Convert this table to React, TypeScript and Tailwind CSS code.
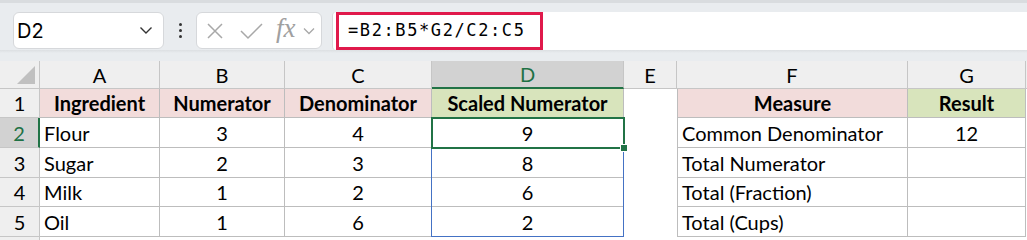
import { ReactNode } from 'react'

const cols = ['A', 'B', 'C', 'D', 'E', 'F', 'G']

const rows: [string, string, string, string, string, string][] = [
  ['Flour', '3', '4', '9', 'Common Denominator', '12'],
  ['Sugar', '2', '3', '8', 'Total Numerator', ''],
  ['Milk', '1', '2', '6', 'Total (Fraction)', ''],
  ['Oil', '1', '6', '2', 'Total (Cups)', ''],
]

const cellFont = { fontFamily: 'Lato, "Open Sans", sans-serif' }

function Cell({ children, className = '' }: { children?: ReactNode; className?: string }) {
  return (
    <div className={`flex items-center border-r border-b border-[#bdbdbd] text-[20px] text-black ${className}`} style={cellFont}>
      {children}
    </div>
  )
}

export default function App() {
  return (
    <div className="w-[1027px] h-[240px] overflow-hidden bg-white">
      {/* toolbar */}
      <div className="h-[61px] bg-[#e9ecef] border-t-[3px] border-[#d9dcdf] relative">
        <div className="flex items-start pt-[9px] pl-[13px]">
          <div className="w-[151px] h-[37px] bg-white rounded-[6px] border border-[#d6d8db] flex items-center justify-between pl-[3px] pr-[10px]">
            <span className="text-[20px] text-black" style={{ fontFamily: 'Inter, "Noto Sans", sans-serif' }}>D2</span>
            <svg width="14" height="9" viewBox="0 0 14 9"><path d="M1.5 1.5 L7 7 L12.5 1.5" fill="none" stroke="#333" strokeWidth="1.4" /></svg>
          </div>
          <div className="w-[32px] h-[37px] flex flex-col items-center justify-center gap-[3px]">
            <div className="w-[3px] h-[3px] rounded-full bg-[#333]" />
            <div className="w-[3px] h-[3px] rounded-full bg-[#333]" />
            <div className="w-[3px] h-[3px] rounded-full bg-[#333]" />
          </div>
          <div className="w-[126px] h-[37px] bg-white rounded-[6px] border border-[#d6d8db] flex items-center pl-[9px]">
            <svg width="18" height="18" viewBox="0 0 18 18"><path d="M2 2 L16 16 M16 2 L2 16" stroke="#a8a8a8" strokeWidth="1.5" /></svg>
            <svg width="25" height="18" viewBox="0 0 25 18" className="ml-[15px]"><path d="M2 9 L9 16 L23 2" fill="none" stroke="#a8a8a8" strokeWidth="1.5" /></svg>
            <span className="ml-[12px] text-[27px] italic text-[#a0a0a0] leading-none -mt-[4px]" style={{ fontFamily: '"Liberation Serif", serif' }}>fx</span>
            <svg width="12" height="8" viewBox="0 0 12 8" className="ml-[7px]"><path d="M1 1.5 L6 6.5 L11 1.5" fill="none" stroke="#a8a8a8" strokeWidth="1.3" /></svg>
          </div>
          <div className="ml-[10px] flex-1 h-[38px] bg-white rounded-l-[4px] border-l border-[#d6d8db] relative">
            <div className="absolute left-[3px] top-0 w-[207px] h-[38px] border-[3px] border-[#e0194b] flex items-center pl-[9px]">
              <span className="text-[17px] tracking-[1.6px] text-black" style={{ fontFamily: '"DejaVu Sans Mono", monospace' }}>=B2:B5*G2/C2:C5</span>
            </div>
          </div>
        </div>
        <div className="absolute left-0 right-0 bottom-[8px] h-[3px] bg-gradient-to-b from-[#dcdfe2] to-[#e9ecef]" />
      </div>

      {/* grid */}
      <div className="relative">
        <div className="grid grid-cols-[40px_120px_125px_147px_192px_53px_231px_118px_1px] grid-rows-[28px_29px_30px_30px_29px_30px_3px]">
          {/* column headers */}
          <div className="bg-[#efefef] border-r border-b border-[#c6c6c6] relative">
            <div className="absolute right-[4px] bottom-[4px] w-0 h-0 border-l-[18px] border-l-transparent border-b-[18px] border-b-[#c0c0c0]" />
          </div>
          {cols.map(c => (
            <div
              key={c}
              className={`flex items-center justify-center text-[20px] border-r border-[#c6c6c6] ${c === 'D' ? 'bg-[#d2d2d2] text-[#1e7145] border-b-2 border-b-[#217346]' : 'bg-[#efefef] text-black border-b'}`}
              style={cellFont}
            >
              {c}
            </div>
          ))}
          <div className="bg-[#efefef] border-b border-[#c6c6c6]" />

          {/* row 1 */}
          <div className="bg-[#efefef] border-r border-b border-[#c6c6c6] flex items-center justify-center text-[20px]" style={cellFont}>1</div>
          <Cell className="bg-[#f2dcdb] justify-center font-bold">Ingredient</Cell>
          <Cell className="bg-[#f2dcdb] justify-center font-bold">Numerator</Cell>
          <Cell className="bg-[#f2dcdb] justify-center font-bold">Denominator</Cell>
          <Cell className="bg-[#d8e4bc] justify-center font-bold">Scaled Numerator</Cell>
          <div className="bg-white" />
          <Cell className="bg-[#f2dcdb] justify-center font-bold border-l">Measure</Cell>
          <Cell className="bg-[#d8e4bc] justify-center font-bold">Result</Cell>
          <div className="bg-white" />

          {rows.map((r, i) => {
            const n = i + 2
            const active = n === 2
            return [
              <div
                key={`h${n}`}
                className={`flex items-center justify-center text-[20px] border-b border-[#c6c6c6] ${active ? 'bg-[#d2d2d2] text-[#1e7145] border-r-2 border-r-[#217346]' : 'bg-[#efefef] text-black border-r'}`}
                style={cellFont}
              >
                {n}
              </div>,
              <Cell key={`a${n}`} className="pl-[4px]">{r[0]}</Cell>,
              <Cell key={`b${n}`} className="justify-center">{r[1]}</Cell>,
              <Cell key={`c${n}`} className="justify-center">{r[2]}</Cell>,
              <Cell key={`d${n}`} className="justify-center">{r[3]}</Cell>,
              <div key={`e${n}`} className="bg-white" />,
              <Cell key={`f${n}`} className="pl-[4px] border-l">{r[4]}</Cell>,
              <Cell key={`g${n}`} className="justify-center">{r[5]}</Cell>,
              <div key={`x${n}`} className="bg-white" />,
            ]
          })}

          {/* bottom sliver */}
          <div className="bg-[#efefef] border-r border-[#c6c6c6]" />
          <div className="col-span-8 bg-white" />
        </div>

        {/* spill range outline D2:D5 */}
        <div className="absolute left-[431px] top-[56px] w-[193px] h-[120px] border border-[#4472c4] pointer-events-none" />
        {/* active cell D2 */}
        <div className="absolute left-[431px] top-[56px] w-[194px] h-[32px] border-2 border-[#217346] pointer-events-none" />
        <div className="absolute left-[620px] top-[83px] w-[8px] h-[8px] bg-[#217346] border border-white pointer-events-none" />
      </div>
    </div>
  )
}
